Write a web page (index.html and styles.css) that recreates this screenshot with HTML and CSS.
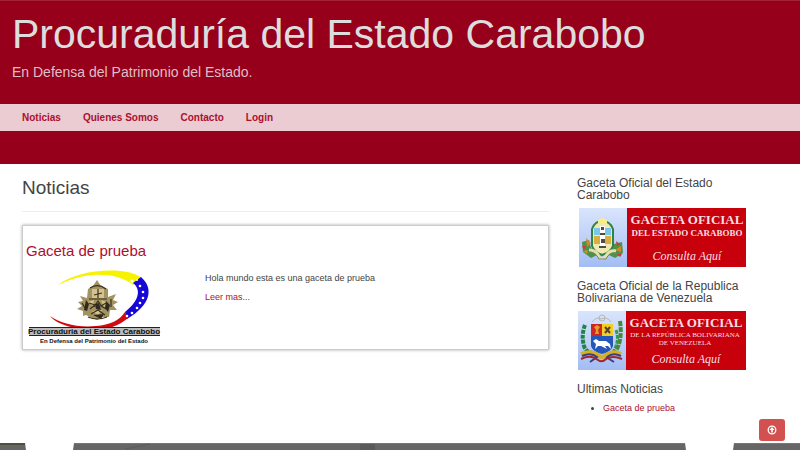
FILE: index.html
```html
<!DOCTYPE html>
<html lang="es">
<head>
<meta charset="utf-8">
<meta name="viewport" content="width=device-width, initial-scale=1">
<title>Procuraduría del Estado Carabobo</title>
<link rel="stylesheet" href="styles.css">
</head>
<body>
<header class="site-header">
  <div class="brand">
    <h1>Procuraduría del Estado Carabobo</h1>
    <p>En Defensa del Patrimonio del Estado.</p>
  </div>
  <nav class="site-nav">
    <a href="#">Noticias</a>
    <a href="#">Quienes Somos</a>
    <a href="#">Contacto</a>
    <a href="#">Login</a>
  </nav>
</header>

<main class="content">
  <section class="news">
    <h2>Noticias</h2>
    <article class="card">
      <h3><a href="#">Gaceta de prueba</a></h3>
      <div class="card-body">
        <svg class="logo" viewBox="0 0 134 76" role="img" aria-label="Procuraduría del Estado Carabobo">
          <path fill="#f7f200" d="M30 16C44 5 70 0 92 2C103 3 110 6 114 9L105 16C96 8 80 5 65 6C52 7 40 11 30 16Z"/>
          <path fill="#1707d6" d="M113 8C126 19 123 36 99 50L97 43C112 31 113 20 105 14Z"/>
          <path fill="#cf0c12" d="M22 47C32 54 50 59 68 57C82 56 92 51 97 43L100 49C91 57 79 61 64 61C43 60 27 54 22 47Z"/>
          <g fill="#fff">
            <circle cx="104" cy="12" r="1.5"/><circle cx="109" cy="11" r="1"/><circle cx="112" cy="17" r="1.3"/><circle cx="115" cy="23" r="1.3"/><circle cx="115" cy="29" r="1.3"/><circle cx="112" cy="34" r="1.3"/><circle cx="109" cy="39" r="1.3"/><circle cx="104" cy="44" r="1.3"/><circle cx="99" cy="47" r="1.3"/>
          </g>
          <path fill="#a39360" d="M69 11L73 17L80 20L80 28L88 25L85 31L90 33L85 36L89 41L82 41L81 48L74 48L69 51L62 48L58 46L55 47L55 42L49 40L54 37L50 33L55 32L52 27L59 29L60 20L65 17Z"/>
          <path fill="#d4c391" d="M64 20H76V29H64ZM60 33L66 31L65 37ZM73 31L80 34L76 38ZM64 42L74 41L70 46Z"/>
          <path fill="none" stroke="#3a311b" stroke-width="1.2" d="M62 19Q70 14 78 20M61 30H79M70 20V29M66 26L74 24M61 34L67 36L62 40M78 34L73 37L80 41M66 38L70 32L74 38M63 45L70 41L77 46M54 34L57 39M83 30L83 38M60 48Q69 52 79 48"/>
          <path fill="#302a1e" d="M58 31L61 35L59 42L56 41ZM78 32L82 36L80 43L77 39ZM67 35L71 34L73 41L68 40ZM65 46L76 45L73 50Z"/>
          <path fill="#bbb" d="M1 58H132V66H1Z"/>
          <path stroke="#222" d="M1 58.500H132M1 66.500H132"/>
          <text class="logo-name" x="66" y="65" text-anchor="middle">Procuraduria del Estado Carabobo</text>
          <text class="logo-motto" x="66" y="74" text-anchor="middle">En Defensa del Patrimonio del Estado</text>
        </svg>
        <div class="card-text">
          <p>Hola mundo esta es una gaceta de prueba</p>
          <p><a href="#">Leer mas...</a></p>
        </div>
      </div>
    </article>
  </section>

  <aside class="sidebar">
    <h4>Gaceta Oficial del Estado Carabobo</h4>
    <a class="banner" href="#">
      <svg viewBox="0 0 170 60" role="img" aria-label="Gaceta Oficial del Estado Carabobo">
        <defs><linearGradient id="sky" x1="0" y1="0" x2="0" y2="1"><stop offset="0" stop-color="#d9e5fc"/><stop offset="1" stop-color="#a3bdf4"/></linearGradient></defs>
        <path fill="url(#sky)" d="M2 0H50V59H2Z"/>
        <path fill="#c8000c" d="M50 0H169V59H50Z"/>
        <path fill="#4c9445" d="M5 34L12 32L14 40L22 46L14 50L6 44ZM37 36L45 34L46 45L38 50L30 46Z"/>
        <path fill="#d9842b" d="M9 30L14 35L10 39ZM6 43L11 42L10 46ZM38 42L44 38L44 44Z"/>
        <path fill="#c83b43" d="M5 38L9 38L7 42ZM39 33L43 36L40 38ZM40 46L45 46L43 49Z"/>
        <path fill="#eee8b1" stroke="#318345" stroke-width="2" d="M15 21Q18 13 25 13Q33 13 36 21V38Q34 44 25 47Q17 44 15 38Z"/>
        <path fill="#f6ef88" d="M21 12L25 10L30 12V15H21Z"/>
        <path fill="#7ac7e9" d="M17 20H34V27H17Z"/>
        <path fill="#d7af45" d="M17 28H24V36H17ZM27 28H34V36H27Z"/>
        <path fill="#fff" d="M23 18H28V40H23Z"/>
        <path fill="#514b42" d="M24 19H27V22H24ZM23 25H28V27H23ZM24 31H28V35H24ZM22 38H29V40H22Z"/>
        <path fill="none" stroke="#e5dfad" stroke-width="3" d="M12 42Q20 42 22 49Q25 53 29 48Q32 42 39 43"/>
        <path fill="none" stroke="#6b8860" d="M11 44Q19 44 22 51H29Q32 44 40 45"/>
        <text class="banner-title" x="110" y="16" text-anchor="middle">GACETA OFICIAL</text>
        <text class="banner-sub" x="110" y="28" text-anchor="middle">DEL ESTADO CARABOBO</text>
        <text class="banner-call" x="110" y="52" text-anchor="middle">Consulta Aquí</text>
      </svg>
    </a>
    <h4>Gaceta Oficial de la Republica Bolivariana de Venezuela</h4>
    <a class="banner" href="#">
      <svg viewBox="0 0 170 60" role="img" aria-label="Gaceta Oficial de la República Bolivariana de Venezuela">
        <path fill="url(#sky)" d="M1 0H49V59H1Z"/>
        <path fill="#c8000c" d="M49 0H169V59H49Z"/>
        <path fill="none" stroke="#b8b8b0" d="M15 11Q20 5 24 8Q30 5 34 11"/>
        <circle cx="25" cy="7" r="3" fill="none" stroke="#b8b8b0"/>
        <path fill="none" stroke="#218344" stroke-width="4" stroke-dasharray="4 1" d="M8 14Q4 24 7 35Q9 41 15 42"/>
        <path fill="none" stroke="#36975b" stroke-width="3" stroke-dasharray="4 1" d="M39 19Q43 30 36 41"/>
        <path fill="none" stroke="#438b36" stroke-width="4" stroke-dasharray="5 1" d="M43 10Q46 32 37 42"/>
        <path fill="#cf2523" d="M14 13H25V25H14Z"/>
        <path fill="#f1cf22" d="M25 13H36V25H25Z"/>
        <path fill="#2457b9" d="M14 25H36V35Q34 41 25 43Q16 41 14 35Z"/>
        <path fill="#dfa02a" d="M17 16L20 14L23 16L21 19L22 23H18L19 19Z"/>
        <path stroke="#5a3f31" stroke-width="2" d="M28 16L33 22M33 16L28 22"/>
        <path fill="#fff" d="M16 30L19 28L22 30L29 30L33 33L34 38L31 35L28 35L30 38L24 35L21 35L18 38L19 33Z"/>
        <path fill="none" stroke="#d7af22" stroke-width="4" d="M4 43Q14 39 21 44Q25 48 29 44Q36 39 44 43"/>
        <path fill="none" stroke="#39407e" stroke-width="2" d="M5 45Q14 41 20 46L13 51M30 46Q36 41 44 45M29 46L37 51"/>
        <path fill="none" stroke="#a52331" stroke-width="2" d="M4 48Q14 43 21 49Q25 52 29 48Q36 44 45 48"/>
        <text class="banner-title" x="109" y="16" text-anchor="middle">GACETA OFICIAL</text>
        <text class="banner-small" x="108" y="26" text-anchor="middle">DE LA REPÚBLICA BOLIVARIANA</text>
        <text class="banner-small" x="108" y="34" text-anchor="middle">DE VENEZUELA</text>
        <text class="banner-call" x="109" y="52" text-anchor="middle">Consulta Aquí</text>
      </svg>
    </a>
    <h4>Ultimas Noticias</h4>
    <ul>
      <li><a href="#">Gaceta de prueba</a></li>
    </ul>
  </aside>
</main>

<footer class="site-footer">
  <svg viewBox="0 0 800 7" preserveAspectRatio="none" aria-hidden="true">
    <path fill="#666" d="M0 0H25L26 7H0ZM74 0H685L686 7H73ZM734 0H800V7H733Z"/>
    <path fill="#4d503e" d="M0 0H25V2H0Z"/>
    <path fill="#5a5a5a" d="M360 0H375V7H360Z"/>
    <path fill="none" stroke="#777" d="M74 0.500H685M734 0.500H800"/>
    <path fill="none" stroke="#5c5c5c" d="M125 6L150 1"/>
  </svg>
</footer>
<button class="to-top" type="button" aria-label="Subir">
  <svg viewBox="0 0 10 10" aria-hidden="true"><circle cx="5" cy="5" r="3.800" fill="none" stroke="#fff" stroke-width="1.300"/><path fill="#fff" d="M5 2L7.500 5H5.800V7.500H4.200V5H2.500Z"/></svg>
</button>
</body>
</html>
```
FILE: styles.css
```css
* {
  box-sizing: border-box;
}

body {
  margin: 0;
  min-height: 100vh;
  display: flex;
  flex-direction: column;
  background: #fff;
  color: #444;
  font: 9px/13px "Liberation Sans", Arial, sans-serif;
}

h1, h2, h3, h4, p, ul {
  margin: 0;
  font-weight: 400;
}

a {
  color: #ad0f2e;
  text-decoration: none;
}

.site-header {
  padding-bottom: 33px;
  background: #96001b;
  border-top: 1px solid #a4213a;
}

.brand {
  padding: 10px 12px 23px;
  color: #ddd;
}

.brand h1 {
  font-size: 41px;
  line-height: 46px;
}

.brand p {
  margin-top: 6px;
  font-size: 14px;
  line-height: 18px;
  color: #dfbfc6;
}

.site-nav {
  display: flex;
  gap: 22px;
  padding: 7px 22px;
  background: #eaccd2;
  font-size: 10px;
  font-weight: 700;
}

.content {
  flex: 1;
  display: grid;
  grid-template-columns: minmax(0, 1fr) 170px;
  gap: 28px;
  padding: 13px 53px 0 22px;
}

.news h2 {
  padding-bottom: 12px;
  border-bottom: 1px solid #eee;
  font-size: 19px;
  line-height: 22px;
}

.card {
  margin-top: 13px;
  padding: 16px 3px 4px;
  border: 1px solid #ccc;
  box-shadow: 0 0 3px #aaa;
}

.card h3 {
  font-size: 15px;
  line-height: 18px;
}

.card-body {
  display: grid;
  grid-template-columns: 134px minmax(0, 1fr);
  gap: 43px;
  padding: 9px 2px 0;
}

.logo {
  display: block;
  width: 100%;
}

.logo text {
  fill: #111;
  font-weight: 700;
}

.logo-name {
  font-size: 8px;
}

.logo-motto {
  font-size: 6px;
}

.card-text {
  display: grid;
  align-content: start;
  gap: 6px;
  padding-top: 3px;
}

.sidebar h4 {
  font-size: 12px;
  line-height: 12px;
}

.banner {
  display: block;
  margin: 7px 0 12px;
}

.banner svg {
  display: block;
  width: 100%;
}

.banner text {
  fill: #f6dfe0;
  font-family: "Liberation Serif", serif;
}

.banner .banner-title {
  font-size: 13px;
  font-weight: 700;
}

.banner .banner-sub {
  font-size: 9px;
  font-weight: 700;
}

.banner .banner-small {
  font-size: 7px;
}

.banner .banner-call {
  font-size: 12px;
  font-style: italic;
}

.sidebar ul {
  margin-top: 7px;
  padding-left: 26px;
}

.site-footer svg {
  display: block;
  width: 100%;
  height: 7px;
}

.to-top {
  position: fixed;
  right: 15px;
  bottom: 9px;
  display: grid;
  place-items: center;
  width: 26px;
  height: 22px;
  padding: 0;
  border: 0;
  border-radius: 3px;
  background: #d35050;
}

.to-top svg {
  width: 10px;
}
```
